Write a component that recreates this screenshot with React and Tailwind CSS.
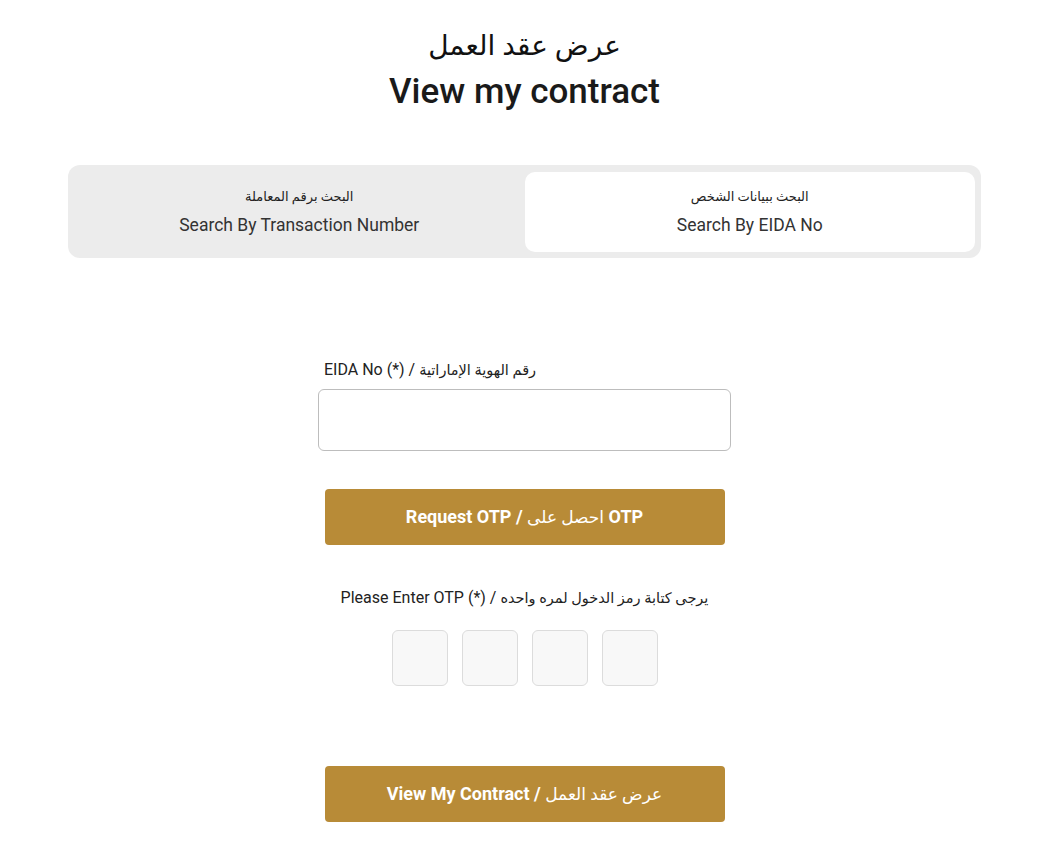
const font = { fontFamily: "Roboto, 'DejaVu Sans', sans-serif" };

const Tab = ({ ar, en, active }) => (
  <div
    className={`flex-1 flex flex-col items-center justify-center h-[80px] rounded-[10px] ${
      active ? "bg-white" : ""
    }`}
  >
    <span className="text-[13px] leading-5 text-[#222]">{ar}</span>
    <span className="text-[17.5px] leading-6 mt-[6px] text-[#333]">{en}</span>
  </div>
);

const GoldButton = ({ children }) => (
  <button className="w-[400px] h-[56px] rounded-[4px] bg-[#b88b37] text-white text-[18px] font-bold">
    {children}
  </button>
);

export default function App() {
  return (
    <div className="min-h-screen bg-white flex flex-col items-center pr-[2px]" style={font}>
      {/* العنوان */}
      <h1 className="mt-[28px] text-[28px] leading-9 text-[#111] font-normal">
        عرض عقد العمل
      </h1>
      <h2 className="mt-[8px] text-[35px] leading-10 font-medium text-[#1a1a1a]">
        View my contract
      </h2>

      {/* التبويبات */}
      <div className="mt-[53px] w-[913px] flex flex-row-reverse pt-[7px] pb-[6px] px-[6px] rounded-[12px] bg-[#ececec]">
        <Tab ar="البحث ببيانات الشخص" en="Search By EIDA No" active />
        <Tab ar="البحث برقم المعاملة" en="Search By Transaction Number" />
      </div>

      {/* النموذج */}
      <div className="mt-[100px] w-[413px] flex flex-col">
        <label className="pl-[6px] text-[16px] leading-6 text-[#222]">
          EIDA No (*) / <span className="text-[14.5px]">رقم الهوية الإماراتية</span>
        </label>
        <input
          type="text"
          className="mt-[6px] h-[62px] w-full rounded-[6px] border border-[#bdbdbd] bg-white px-3 outline-none"
        />
      </div>

      <div className="mt-[38px]">
        <GoldButton>
          Request OTP / <span className="font-normal text-[17px]">احصل على</span> OTP
        </GoldButton>
      </div>

      <p className="mt-[41px] text-[16px] leading-6 text-[#222]">
        Please Enter OTP (*) / <span className="text-[14.5px]">يرجى كتابة رمز الدخول لمره واحده</span>
      </p>

      <div className="mt-[19px] flex gap-[14px]">
        {[0, 1, 2, 3].map((i) => (
          <input
            key={i}
            maxLength={1}
            className="w-[56px] h-[56px] rounded-[6px] border border-[#dcdcdc] bg-[#f8f8f8] text-center outline-none"
          />
        ))}
      </div>

      <div className="mt-[80px] mb-[27px]">
        <GoldButton>
          View My Contract / <span className="font-normal text-[17px]">عرض عقد العمل</span>
        </GoldButton>
      </div>
    </div>
  );
}
